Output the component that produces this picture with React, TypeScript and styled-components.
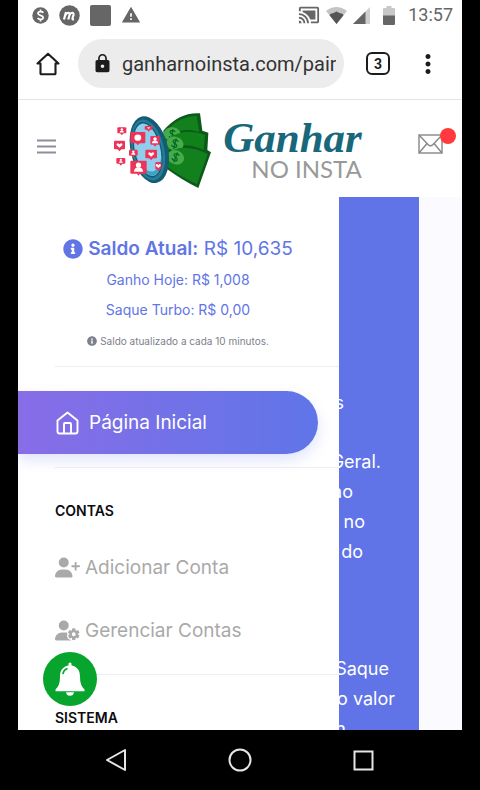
import React from "react";
import styled, { createGlobalStyle } from "styled-components";
import { FaInfoCircle } from "react-icons/fa";
import { FaUserPlus, FaUserGear } from "react-icons/fa6";
import { MdCastConnected, MdLock, MdMoreVert, MdWarning } from "react-icons/md";

const GlobalStyle = createGlobalStyle`
  *, *::before, *::after { box-sizing: border-box; }
  body { margin: 0; background: #000; font-family: Inter, sans-serif; }
  button { border: 0; padding: 0; background: none; font: inherit; color: inherit; cursor: pointer; }
  svg { display: block; flex: none; }
`;

const Device = styled.div`
  display: flex;
  flex-direction: column;
  height: 100vh;
  padding: 0 18px;
  background: #000;
`;

const StatusBar = styled.div`
  display: flex;
  align-items: center;
  justify-content: space-between;
  height: 32px;
  flex: none;
  padding: 0 9px 2px 14px;
  background: #fff;
  color: #666;
`;

const StatusGroup = styled.div<{ $gap: number }>`
  display: flex;
  align-items: center;
  gap: ${(p) => p.$gap}px;
`;

const Clock = styled.time`
  font: 400 18px/24px Roboto, sans-serif;
  color: #666;
`;

const BrowserBar = styled.div`
  display: flex;
  align-items: center;
  gap: 18px;
  height: 68px;
  flex: none;
  padding: 0 20px 4px 18px;
  background: #fff;
  border-bottom: 1px solid #e4e4e4;
  color: #1c1c1f;
`;

const IconButton = styled.button`
  display: flex;
  align-items: center;
  justify-content: center;
  flex: none;
`;

const AddressField = styled.label`
  display: flex;
  align-items: center;
  gap: 9px;
  flex: 1;
  min-width: 0;
  height: 49px;
  padding: 0 8px 0 14px;
  border-radius: 25px;
  background: #ececec;
`;

const AddressInput = styled.input`
  flex: 1;
  min-width: 0;
  border: 0;
  padding: 0;
  outline: 0;
  background: transparent;
  color: #333;
  font: 400 20px/26px Roboto, sans-serif;
`;

const BrowserActions = styled.div`
  display: flex;
  align-items: center;
  gap: 24px;
  padding-left: 4px;
`;

const TabCount = styled(IconButton)`
  width: 24px;
  height: 23px;
  border: 2px solid #1c1c1f;
  border-radius: 6px;
  font: 700 14px/18px Roboto, sans-serif;
`;

const MenuButton = styled(IconButton)`
  width: 28px;
`;

const SiteHeader = styled.header`
  display: flex;
  align-items: center;
  justify-content: space-between;
  height: 97px;
  flex: none;
  padding: 0 6px 4px 19px;
  background: #fff;
`;

const Brand = styled.a`
  display: flex;
  align-items: center;
  gap: 10px;
  padding-top: 6px;
  text-decoration: none;
`;

const BrandWords = styled.span`
  display: flex;
  flex-direction: column;
  align-items: flex-end;
`;

const BrandScript = styled.span`
  font: italic 700 43px/38px "Liberation Serif", serif;
  color: #18677b;
`;

const BrandSub = styled.span`
  font: 400 24px/24px Lato, sans-serif;
  color: #999;
`;

const MailButton = styled(IconButton)`
  position: relative;
  width: 38px;
  height: 32px;
  justify-content: flex-start;
`;

const MailDot = styled.span`
  position: absolute;
  top: 0;
  right: 0;
  width: 16px;
  height: 16px;
  border-radius: 50%;
  background: #ff3a3e;
`;

const HeaderActions = styled.div`
  padding-bottom: 6px;
`;

const Stage = styled.div`
  display: grid;
  grid-template-columns: minmax(0, 1fr);
  grid-template-rows: minmax(0, 1fr);
  flex: 1;
  min-height: 0;
  overflow: hidden;
  position: relative;
  background: #fafaff;
`;

const Article = styled.main`
  grid-area: 1 / 1;
  display: flex;
  flex-direction: column;
  margin-right: 43px;
  padding-top: 191px;
  background: #6074e8;
  color: #fff;
  font-size: 18px;
  line-height: 30px;
  overflow: hidden;
`;

const Paragraph = styled.div<{ $gap?: number }>`
  margin-top: ${(p) => p.$gap ?? 0}px;
`;

const Line = styled.div<{ $end: number }>`
  padding-right: ${(p) => p.$end}px;
  text-align: right;
`;

const Drawer = styled.aside`
  grid-area: 1 / 1;
  z-index: 1;
  width: 72.3%;
  padding-top: 36px;
  background: #fff;
  overflow: hidden;
`;

const Balance = styled.section`
  margin-left: 37px;
  padding: 0 38px 9px 0;
  display: flex;
  flex-direction: column;
  align-items: center;
  color: #6175e6;
  white-space: nowrap;
`;

const BalanceTotal = styled.div`
  display: flex;
  align-items: center;
  gap: 5px;
  font-size: 19px;
  line-height: 32px;
`;

const Strong = styled.strong`
  font-weight: 600;
`;

const BalanceLine = styled.div`
  font-size: 14px;
  line-height: 30px;
`;

const BalanceNote = styled.small`
  display: flex;
  align-items: center;
  gap: 3px;
  font-size: 10px;
  line-height: 32px;
  color: #7d7f8c;
`;

const Divider = styled.hr`
  margin: 0 0 0 37px;
  border: 0;
  border-top: 1px solid #eeeef1;
`;

const HomeLink = styled.a`
  display: flex;
  align-items: center;
  gap: 10px;
  height: 63px;
  margin: 24px 21px 13px 0;
  padding-left: 38px;
  border-radius: 0 32px 32px 0;
  background: linear-gradient(90deg, #886de7, #5f75e8);
  box-shadow: 0 6px 14px rgba(96, 116, 232, 0.2);
  color: #fff;
  font-size: 19px;
  text-decoration: none;
`;

const Heading = styled.h2`
  margin: 28px 0 10px 37px;
  font-size: 14px;
  line-height: 30px;
  font-weight: 600;
  color: #0c0c10;
`;

const NavList = styled.nav`
  display: flex;
  flex-direction: column;
  padding: 0 0 12px 37px;
`;

const NavItem = styled.a`
  display: flex;
  align-items: center;
  gap: 5px;
  height: 63px;
  color: #a9a9a9;
  font-size: 19px;
  text-decoration: none;
  white-space: nowrap;
`;

const BellButton = styled(IconButton)`
  position: absolute;
  z-index: 2;
  left: 25px;
  bottom: 24px;
  width: 54px;
  height: 54px;
  border-radius: 50%;
  background: #07a52d;
  color: #fff;
`;

const SystemNav = styled.div`
  display: flex;
  align-items: center;
  justify-content: space-around;
  height: 60px;
  flex: none;
  padding: 0 38px 0 36px;
  color: #e6e6e6;
`;

const CoinIcon = () => (
  <svg width="17" height="17" viewBox="0 0 17 17">
    <circle cx="8.500" cy="8.500" r="8.200" fill="#666" />
    <path d="M11.300 5.700C10.600 4.500 6 4 6 6.500c0 2.300 5.200 1.500 5.200 4 0 2.400-4.600 2.200-5.500.5M8.500 2.500v2m0 8v2" fill="none" stroke="#fff" strokeWidth="1.700" />
  </svg>
);

const EmIcon = () => (
  <svg width="21" height="21" viewBox="0 0 21 21">
    <circle cx="10.500" cy="10.500" r="10.200" fill="#666" />
    <path d="M4 14.500 6 7M5.500 10c1.500-3 4.500-3 4 0l-1.200 4.500M9.500 10c1.500-3 4.500-3 4 0l-1 3c-.3 1.300.4 1.600 1.500 1.300" fill="none" stroke="#fff" strokeWidth="2.200" transform="translate(1 0)" />
  </svg>
);

const SquareIcon = () => (
  <svg width="21" height="21" viewBox="0 0 21 21"><rect width="21" height="21" rx="2" fill="#666" /></svg>
);

const WifiIcon = () => (
  <svg width="21" height="17" viewBox="0 0 21 17">
    <path d="M0 4Q10.500-4 21 4L10.500 17Z" fill="#c4c4c4" />
    <path d="M3.500 8.300Q4.500 6 7 6.300L10.500 4.500 14 6.300Q16.500 6 17.500 8.300L10.500 17Z" fill="#555" />
  </svg>
);

const SignalIcon = () => (
  <svg width="17" height="17" viewBox="0 0 17 17">
    <path d="M17 0V17H0Z" fill="#cfcfcf" />
    <path d="M12.500 4.500V17H0Z" fill="#666" />
  </svg>
);

const BatteryIcon = () => (
  <svg width="12" height="19" viewBox="0 0 12 19">
    <path d="M3.500 0h5v2H11q1 0 1 1v7H0V3q0-1 1-1h2.500Z" fill="#c8c8c8" />
    <path d="M0 9.500h12V18q0 1-1 1H1q-1 0-1-1Z" fill="#666" />
  </svg>
);

const BrowserHomeIcon = () => (
  <svg width="24" height="24" viewBox="0 0 24 24" fill="none" stroke="currentColor" strokeWidth="2.100" strokeLinejoin="round">
    <path d="M4.500 11.500H1.500L12 1.800l10.500 9.700h-3v10q0 .8-.8.8H5.300q-.8 0-.8-.8Z" />
  </svg>
);

const BurgerIcon = () => (
  <svg width="19" height="15" viewBox="0 0 19 15"><path d="M0 1.500h19M0 7.500h19M0 13.500h19" stroke="#8e8e99" strokeWidth="2" /></svg>
);

const MailIcon = () => (
  <svg width="25" height="20" viewBox="0 0 25 20" fill="none" stroke="#878787" strokeWidth="1.400">
    <rect x="1" y="1" width="23" height="18" />
    <path d="M1 1 10 10.500q2.500 2.500 5 0L24 1M1 19l8-9.500M24 19l-8-9.500" />
  </svg>
);

const PageHomeIcon = () => (
  <svg width="23" height="24" viewBox="0 0 23 24" fill="none" stroke="currentColor" strokeWidth="1.900" strokeLinejoin="round">
    <path d="M1.500 9.500 11.500 1.500l10 8v11q0 2-2 2h-16q-2 0-2-2Z" />
    <path d="M8 22.500V13q0-1 1-1h5q1 0 1 1v9.500" />
  </svg>
);

const BellIcon = () => (
  <svg width="30" height="34" viewBox="0 0 30 34">
    <path d="M13.500 1.500q1.500-2.200 3 0V3.500C23 4.800 25 9 25 15c0 6 1.500 10 4.500 12.500v1.700H.5v-1.700C3.500 25 5 21 5 15 5 9 7 4.800 13.500 3.500Z" fill="#fff" />
    <path d="M11 30.200h8q-.5 3.600-4 3.600t-4-3.600Z" fill="#fff" />
    <path d="M8 11.500Q8.800 7.800 12 6.800" fill="none" stroke="#07a52d" strokeWidth="1.600" strokeLinecap="round" />
  </svg>
);

type Reaction = { x: number; y: number; w: number; h: number; kind: "heart" | "person" | "chat" };

const reactions: Reaction[] = [
  { x: 54, y: 82, w: 27, h: 18, kind: "person" },
  { x: 44, y: 122, w: 33, h: 26, kind: "heart" },
  { x: 51, y: 174, w: 27, h: 17, kind: "person" },
  { x: 136, y: 78, w: 24, h: 11, kind: "heart" },
  { x: 93, y: 96, w: 45, h: 34, kind: "chat" },
  { x: 153, y: 108, w: 28, h: 26, kind: "person" },
  { x: 89, y: 149, w: 26, h: 18, kind: "person" },
  { x: 138, y: 149, w: 35, h: 26, kind: "heart" },
  { x: 93, y: 182, w: 49, h: 39, kind: "person" },
  { x: 168, y: 186, w: 18, h: 22, kind: "heart" },
];

const ReactionMark = ({ x, y, w, h, kind }: Reaction) => {
  const cx = x + w / 2;
  const cy = y + h / 2;
  const r = h / 4;
  return (
    <g>
      <rect x={x} y={y} width={w} height={h} rx="3" fill="#ed3458" />
      <path d={`M${cx - 6} ${y + h - 1}h12l-6 7Z`} fill="#ed3458" />
      {kind === "heart" && (
        <path d={`M${cx} ${cy + r * 1.3}L${cx - r * 1.4} ${cy}Q${cx - r * 1.2} ${cy - r * 1.5} ${cx} ${cy - r * 0.4}Q${cx + r * 1.2} ${cy - r * 1.5} ${cx + r * 1.4} ${cy}Z`} fill="#fff" />
      )}
      {kind === "chat" && <ellipse cx={cx} cy={cy} rx={r * 1.2} ry={r * 1.1} fill="#fff" />}
      {kind === "person" && (
        <>
          <circle cx={cx} cy={cy - r * 0.6} r={r * 0.8} fill="#fff" />
          <path d={`M${cx - r * 1.4} ${cy + r * 1.4}q0-${r * 1.3} ${r * 1.4}-${r * 1.3}t${r * 1.4} ${r * 1.3}Z`} fill="#fff" />
        </>
      )}
    </g>
  );
};

const BankNote = ({ x, y, angle }: { x: number; y: number; angle: number }) => (
  <g transform={`translate(${x} ${y}) rotate(${angle})`}>
    <ellipse rx="26" ry="21" fill="#45ac4a" />
    <path d="M8-8C4-14-8-12-7-5-6 1 8-1 7 6 6 13-7 12-9 6M0-16V16" fill="none" stroke="#0b6a22" strokeWidth="4" />
  </g>
);

const LogoMark = () => (
  <svg width="101" height="80" viewBox="38 30 303 240">
    <path d="M192 92Q240 36 302 40L309 92 327 98 324 150 335 157 297 264Q250 242 200 205Z" fill="#0c5a1a" />
    <path d="M199 92Q242 48 292 47L300 96Q244 78 200 116Z" fill="#12801d" />
    <BankNote x={219} y={103} angle={5} />
    <path d="M200 122Q246 80 317 104L313 150Q250 120 202 154Z" fill="#10801a" />
    <BankNote x={227} y={131} angle={15} />
    <path d="M203 160Q250 126 325 162L293 252Q250 234 203 200Z" fill="#12801d" />
    <BankNote x={229} y={172} angle={22} />
    <g transform="rotate(-13 150 149)">
      <ellipse cx="150" cy="149" rx="56" ry="102" fill="#155b74" />
      <ellipse cx="146" cy="149" rx="48" ry="93" fill="#237f99" />
      <ellipse cx="145" cy="148" rx="42" ry="85" fill="#155b74" />
      <ellipse cx="145" cy="148" rx="38" ry="80" fill="#8fcfee" />
      <path d="M111 182Q124 229 147 227T181 175Q168 214 146 215 126 214 111 182Z" fill="#3aa3c4" />
    </g>
    {reactions.map((r) => (
      <ReactionMark key={`${r.x}-${r.y}`} {...r} />
    ))}
  </svg>
);

const paragraphs = [
  { gap: 0, lines: [{ text: "s", end: 75 }] },
  { gap: 29, lines: [{ text: "Geral.", end: 38 }, { text: "ao", end: 66 }, { text: "no", end: 54 }, { text: "do", end: 56 }] },
  { gap: 87, lines: [{ text: "Saque", end: 30 }, { text: "o valor", end: 24 }, { text: "n", end: 73 }] },
];

export default function App() {
  return (
    <>
      <GlobalStyle />
      <Device>
        <StatusBar>
          <StatusGroup $gap={10}>
            <CoinIcon />
            <EmIcon />
            <SquareIcon />
            <MdWarning size={20} />
          </StatusGroup>
          <StatusGroup $gap={13}>
            <StatusGroup $gap={6}>
              <MdCastConnected size={22} />
              <WifiIcon />
              <SignalIcon />
            </StatusGroup>
            <BatteryIcon />
            <Clock>13:57</Clock>
          </StatusGroup>
        </StatusBar>
        <BrowserBar>
          <IconButton aria-label="Início"><BrowserHomeIcon /></IconButton>
          <AddressField>
            <MdLock size={21} />
            <AddressInput aria-label="Endereço" defaultValue="ganharnoinsta.com/pair" />
          </AddressField>
          <BrowserActions>
            <TabCount aria-label="Abas">3</TabCount>
            <MenuButton aria-label="Mais opções"><MdMoreVert size={30} /></MenuButton>
          </BrowserActions>
        </BrowserBar>
        <SiteHeader>
          <IconButton aria-label="Menu"><BurgerIcon /></IconButton>
          <Brand href="#inicio">
            <LogoMark />
            <BrandWords>
              <BrandScript>Ganhar</BrandScript>
              <BrandSub>NO INSTA</BrandSub>
            </BrandWords>
          </Brand>
          <HeaderActions>
            <MailButton aria-label="Mensagens"><MailIcon /><MailDot /></MailButton>
          </HeaderActions>
        </SiteHeader>
        <Stage>
          <Article>
            {paragraphs.map((p) => (
              <Paragraph key={p.gap} $gap={p.gap}>
                {p.lines.map((l) => <Line key={l.text} $end={l.end}>{l.text}</Line>)}
              </Paragraph>
            ))}
          </Article>
          <Drawer>
            <Balance>
              <BalanceTotal>
                <FaInfoCircle size={20} />
                <span><Strong>Saldo Atual:</Strong> R$ 10,635</span>
              </BalanceTotal>
              <BalanceLine>Ganho Hoje: R$ 1,008</BalanceLine>
              <BalanceLine>Saque Turbo: R$ 0,00</BalanceLine>
              <BalanceNote><FaInfoCircle size={10} />Saldo atualizado a cada 10 minutos.</BalanceNote>
            </Balance>
            <Divider />
            <HomeLink href="#inicio"><PageHomeIcon />Página Inicial</HomeLink>
            <Divider />
            <Heading>CONTAS</Heading>
            <NavList>
              <NavItem href="#adicionar"><FaUserPlus size={25} />Adicionar Conta</NavItem>
              <NavItem href="#gerenciar"><FaUserGear size={25} />Gerenciar Contas</NavItem>
            </NavList>
            <Divider />
            <Heading>SISTEMA</Heading>
          </Drawer>
          <BellButton aria-label="Notificações"><BellIcon /></BellButton>
        </Stage>
        <SystemNav>
          <IconButton aria-label="Voltar">
            <svg width="22" height="24" viewBox="0 0 22 24" fill="none" stroke="currentColor" strokeWidth="2" strokeLinejoin="round"><path d="M20 2v20L2 12Z" /></svg>
          </IconButton>
          <IconButton aria-label="Tela inicial">
            <svg width="24" height="24" viewBox="0 0 24 24" fill="none" stroke="currentColor" strokeWidth="2"><circle cx="12" cy="12" r="10.500" /></svg>
          </IconButton>
          <IconButton aria-label="Recentes">
            <svg width="21" height="21" viewBox="0 0 21 21" fill="none" stroke="currentColor" strokeWidth="2"><rect x="1.500" y="1.500" width="18" height="18" /></svg>
          </IconButton>
        </SystemNav>
      </Device>
    </>
  );
}
